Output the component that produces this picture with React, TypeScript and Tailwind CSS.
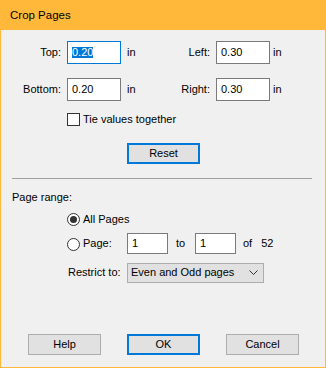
import React from 'react';

const font = "font-['Segoe_UI','Liberation_Sans',Arial,sans-serif]";

const TextBox = ({ value, w = 'w-[54px]', h = 'h-[23px]', focused = false }: { value: string; w?: string; h?: string; focused?: boolean }) => (
    <div className={`${w} ${h} flex items-center bg-white border pl-[4px] ${focused ? 'border-[#0078d7]' : 'border-[#7a7a7a]'}`}>
        {focused ? <span className="bg-[#0078d7] text-white leading-[11px] h-[11px]">{value}</span> : <span>{value}</span>}
    </div>
);

const Radio = ({ checked }: { checked?: boolean }) => (
    <div className="w-[13px] h-[13px] rounded-full border border-[#333333] bg-white flex items-center justify-center">
        {checked && <div className="w-[7px] h-[7px] rounded-full bg-[#333333]" />}
    </div>
);

const Button = ({ label, focused = false }: { label: string; focused?: boolean }) => (
    <div className={`w-[73px] h-[21px] flex items-center justify-center bg-[#e1e1e1] ${focused ? 'border-2 border-[#0078d7]' : 'border border-[#adadad]'}`}>
        {label}
    </div>
);

const App = () => {
    return (
        <div className={`w-[326px] h-[368px] bg-[#ffb839] flex flex-col text-[11px] leading-[16.5px] text-black ${font}`}>
            <div className="h-[30px] flex items-center pl-[10px] text-[11.5px]">Crop Pages</div>
            <div className="flex-1 mx-[1px] mb-[1px] bg-[#f0f0f0] flex flex-col">
                {/* margins */}
                <div className="flex items-center mt-[11px]">
                    <span className="w-[60px] text-right">Top:</span>
                    <div className="ml-[6px]"><TextBox value="0.20" focused /></div>
                    <span className="ml-[6px] w-[20px]">in</span>
                    <span className="w-[63px] text-right">Left:</span>
                    <div className="ml-[6px]"><TextBox value="0.30" /></div>
                    <span className="ml-[3px]">in</span>
                </div>
                <div className="flex items-center mt-[14px]">
                    <span className="w-[60px] text-right">Bottom:</span>
                    <div className="ml-[6px]"><TextBox value="0.20" /></div>
                    <span className="ml-[6px] w-[20px]">in</span>
                    <span className="w-[63px] text-right">Right:</span>
                    <div className="ml-[6px]"><TextBox value="0.30" /></div>
                    <span className="ml-[3px]">in</span>
                </div>
                <div className="flex items-center mt-[10px] ml-[66px]">
                    <div className="w-[13px] h-[13px] border border-[#333333] bg-white" />
                    <span className="ml-[3px]">Tie values together</span>
                </div>
                <div className="mt-[15px] ml-[126px]">
                    <Button label="Reset" focused />
                </div>
                <div className="mt-[14px] ml-[11px] w-[300px] h-px bg-[#a0a0a0]" />

                {/* page range */}
                <div className="mt-[10px] ml-[11px] leading-[16px]">Page range:</div>
                <div className="flex items-center mt-[7px] ml-[66px] h-[16px]">
                    <Radio checked />
                    <span className="ml-[3px]">All Pages</span>
                </div>
                <div className="flex items-center mt-[5px] ml-[66px]">
                    <div className="mt-[3px]"><Radio /></div>
                    <span className="ml-[3px] w-[44px]">Page:</span>
                    <TextBox value="1" w="w-[41px]" h="h-[21px]" />
                    <span className="ml-[8px] w-[19px]">to</span>
                    <TextBox value="1" w="w-[41px]" h="h-[21px]" />
                    <span className="ml-[7px]">of</span>
                    <span className="ml-[9px]">52</span>
                </div>
                <div className="flex items-center mt-[9px] ml-[67px]">
                    <span className="w-[59px]">Restrict to:</span>
                    <div className="w-[137px] h-[20px] flex items-center justify-between bg-[#e1e1e1] border border-[#adadad] pl-[3px] pr-[5px]">
                        <span>Even and Odd pages</span>
                        <svg width="9" height="5" viewBox="0 0 9 5" fill="none">
                            <path d="M0.5 0.5 L4.5 4.5 L8.5 0.5" stroke="#333333" strokeWidth="1" />
                        </svg>
                    </div>
                </div>

                {/* buttons */}
                <div className="flex gap-[26px] ml-[27px] mt-[51px]">
                    <Button label="Help" />
                    <Button label="OK" focused />
                    <Button label="Cancel" />
                </div>
            </div>
        </div>
    );
};

export default App;
